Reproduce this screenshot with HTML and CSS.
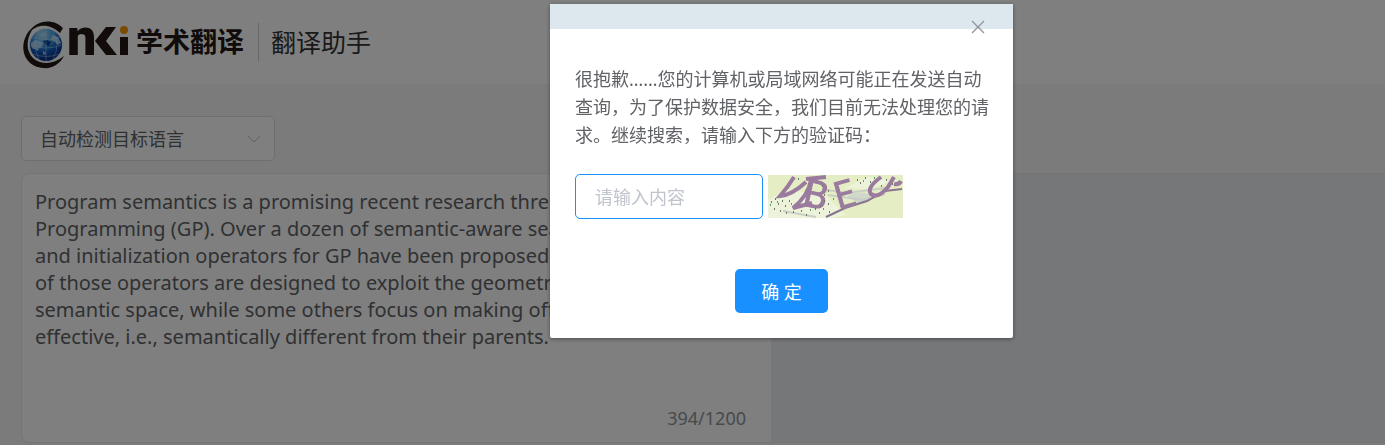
FILE: index.html
```html
<!DOCTYPE html>
<html lang="zh-CN">
<head>
<meta charset="utf-8">
<title>学术翻译 翻译助手</title>
<link rel="stylesheet" href="styles.css">
</head>
<body>
<div class="page">
  <header class="header">
    <a class="brand" href="#" aria-label="CNKI 学术翻译">
      <svg class="brand-mark" viewBox="0 0 108 50" width="108" height="50" aria-hidden="true">
        <defs>
          <radialGradient id="globe" cx="40%" cy="18%" r="85%">
            <stop offset="0" stop-color="#b4e2fa"/>
            <stop offset=".35" stop-color="#4aa3e4"/>
            <stop offset=".65" stop-color="#1258b8"/>
            <stop offset="1" stop-color="#06267c"/>
          </radialGradient>
        </defs>
        <path d="M6 13C13 1 30-3 41 8L38 13C30 5 18 3 10 10Z" fill="#231815"/>
        <path d="M7 11C-5 27 3 47 21 48C30 49 38 44 42 36C31 45 19 45 11 38C4 31 4 20 10 10Z" fill="#231815"/>
        <circle cx="24" cy="25" r="17" fill="#dff2fc"/>
        <circle cx="24" cy="25" r="16" fill="url(#globe)"/>
        <path d="M9 23L13 20 18 21 21 23 20 27 17 28 16 31 13 29 11 29 9 26ZM21 31L24 33 23 35 21 34ZM30 15L36 17 39 23 36 25 33 22 29 20Z" fill="#c5eaff" opacity=".75"/>
        <path d="M21 21L25 20 29 22 27 26 24 25Z" fill="#0b3c94"/>
        <path d="M9 25Q24 31 40 25M11 17Q24 22 38 17M11 34Q24 39 37 34M24 9V41M17 11Q9 25 17 39M31 11Q39 25 31 39" fill="none" stroke="#d9f2ff" stroke-width="1" opacity=".4"/>
        <text x="45" y="35" class="brand-letter">n</text>
        <path d="M84 7H94L84 21L95 35H84L73 21Z" fill="#231815"/>
        <rect x="98" y="17" width="8" height="18" fill="#231815"/>
        <circle cx="102" cy="10" r="4" fill="#f39800"/>
      </svg>
      <span class="brand-name">学术翻译</span>
    </a>
    <h1 class="product">翻译助手</h1>
  </header>
  <main class="main">
    <div class="toolbar">
      <label class="select">
        <select aria-label="目标语言"><option>自动检测目标语言</option></select>
        <svg viewBox="0 0 14 8" width="14" height="8" aria-hidden="true"><path d="M1 1L7 7L13 1" fill="none" stroke="#c0c4cc" stroke-width="1"/></svg>
      </label>
    </div>
    <div class="panels">
      <section class="source">
        <textarea class="source-text" aria-label="原文">Program semantics is a promising recent research thread in Genetic
Programming (GP). Over a dozen of semantic-aware search, selection
and initialization operators for GP have been proposed to date. Some
of those operators are designed to exploit the geometric properties
semantic space, while some others focus on making offspring
effective, i.e., semantically different from their parents.</textarea>
        <div class="count">394/1200</div>
      </section>
      <section class="result"></section>
    </div>
  </main>
</div>
<div class="overlay">
  <form class="dialog" role="dialog" aria-modal="true" aria-labelledby="notice">
    <div class="dialog-bar">
      <button class="close" type="button" aria-label="关闭">
        <svg viewBox="0 0 14 14" width="14" height="14"><path d="M1 1L13 13M13 1L1 13" fill="none" stroke="#909399" stroke-width="1.3"/></svg>
      </button>
    </div>
    <div class="dialog-body">
      <p class="notice" id="notice">很抱歉……您的计算机或局域网络可能正在发送自动<br>查询，为了保护数据安全，我们目前无法处理您的请<br>求。继续搜索，请输入下方的验证码：</p>
      <div class="verify">
        <input class="code" type="text" placeholder="请输入内容" aria-label="验证码">
        <svg class="captcha" viewBox="0 0 135 43" width="135" height="43" role="img" aria-label="验证码图片">
          <rect width="135" height="43" fill="#e5edc4"/>
          <path d="M0 25L20 15 57 20 78 40 62 43 0 43ZM76 13L100 2 125 6 100 14Z" fill="#edf3db"/>
          <path d="M54 14L78 18 118 13M60 20L95 25 117 19M15 36L48 42" fill="none" stroke="#c9cfc4" stroke-width="2"/>
          <path d="M79 20Q97 14 105 22L90 29Z" fill="#c3c9cf" opacity=".6"/>
          <path d="M58 42L77 33 99 26 117 16 134 14" fill="none" stroke="#88758d" stroke-width="2"/>
          <path d="M26 2Q20 12 12 21Q24 20 38 7M43 5Q40 21 25 33L44 28M38 4L58 2" fill="none" stroke="#9a7b9e" stroke-width="4"/>
          <text class="captcha-letter" x="33" y="30" transform="rotate(12 33 30)">B</text>
          <text class="captcha-letter" x="70" y="35" transform="rotate(-16 70 35)">E</text>
          <path d="M113 2Q98 13 103 19Q110 24 120 12L126 2M126 9Q131 10 133 6" fill="none" stroke="#9a7b9e" stroke-width="4"/>
          <path d="M3 27h1M7 24h1M10 29h1M14 26h1M17 31h1M21 26h1M6 34h1M12 36h1M18 38h1M25 37h1M33 36h1M38 40h1M47 34h1M52 31h1M56 26h1M60 29h1M51 38h1M61 37h1M56 20h1M60 16h1M54 11h1M30 4h1M89 5h1M92 8h1M97 3h1M102 7h1M113 11h1M124 9h1M118 5h1" stroke="#6f7868" stroke-width="2"/>
          <path d="M2 30h1M9 27h1M23 29h1M42 35h1M55 34h1M65 24h1M95 6h1M106 3h1" stroke="#57a067" stroke-width="2"/>
        </svg>
      </div>
      <div class="actions"><button class="confirm" type="submit">确 定</button></div>
    </div>
  </form>
</div>
</body>
</html>
```
FILE: styles.css
```css
* { box-sizing: border-box; }
body {
  margin: 0;
  background: #f7f7f7;
  color: #606266;
  font-family: "Noto Sans", "Noto Sans CJK SC", sans-serif;
}
.page { min-height: 100vh; display: flex; flex-direction: column; }
.header {
  display: flex;
  align-items: center;
  height: 84px;
  padding: 0 22px;
  background: #fff;
}
.brand {
  display: flex;
  align-items: center;
  gap: 6px;
  padding-right: 14px;
  color: #231815;
  text-decoration: none;
}
.brand-mark { display: block; margin-top: 6px; overflow: visible; }
.brand-letter { font: 900 52px Roboto, sans-serif; fill: #231815; }
.brand-name { font-size: 27px; font-weight: 700; line-height: 38px; }
.product {
  margin: 0;
  padding-left: 12px;
  border-left: 1px solid #ccc;
  color: #333;
  font-size: 25px;
  font-weight: 400;
  line-height: 38px;
}
.main { flex: 1; display: flex; flex-direction: column; }
.toolbar { padding: 32px 21px 12px; }
.select { display: inline-flex; align-items: center; position: relative; vertical-align: top; }
.select select {
  appearance: none;
  width: 254px;
  height: 45px;
  padding: 0 40px 0 18px;
  border: 1px solid #dcdfe6;
  border-radius: 5px;
  background: #fff;
  color: #606266;
  font: inherit;
  font-size: 18px;
}
.select svg { position: absolute; right: 14px; pointer-events: none; }
.panels { flex: 1; display: flex; padding: 0 0 2px 21px; }
.source {
  flex: 0 0 750px;
  display: flex;
  flex-direction: column;
  border: 1px solid #e8e8e8;
  border-right: 0;
  border-radius: 8px 0 0 8px;
  background: #fff;
}
.source-text {
  flex: 1;
  width: 100%;
  padding: 14px 13px 0;
  border: 0;
  outline: 0;
  resize: none;
  overflow: hidden;
  background: transparent;
  color: #606266;
  font: 20px/27px "Noto Sans", sans-serif;
}
.count {
  padding: 0 25px 12px;
  color: #909399;
  font-size: 18px;
  line-height: 24px;
  text-align: right;
}
.result {
  flex: 1;
  border: solid #e8e8e8;
  border-width: 1px 0;
  background: #edeff3;
}
.overlay {
  position: fixed;
  inset: 0;
  padding: 4px 0 0 550px;
  background: rgba(0, 0, 0, .5);
}
.dialog {
  width: 463px;
  border-radius: 2px;
  background: #fff;
  box-shadow: 0 1px 4px rgba(0, 0, 0, .4);
}
.dialog-bar {
  display: flex;
  justify-content: flex-end;
  height: 25px;
  padding: 16px 28px 0;
  background: #dde8ee;
}
.close { height: 14px; padding: 0; border: 0; background: transparent; }
.close svg { display: block; }
.dialog-body { padding: 36px 25px 25px; }
.notice { margin: 0; font-size: 18px; line-height: 28px; white-space: nowrap; }
.verify { display: flex; align-items: center; gap: 5px; margin-top: 25px; }
.code {
  width: 188px;
  height: 45px;
  padding: 0 19px;
  border: 1px solid #1890ff;
  border-radius: 5px;
  outline: 0;
  color: #606266;
  font: inherit;
  font-size: 18px;
}
.code::placeholder { color: #c0c4cc; }
.captcha { overflow: visible; }
.captcha-letter {
  font: 400 38px "Open Sans", sans-serif;
  fill: #9a7b9e;
  stroke: #9a7b9e;
  stroke-width: 1px;
}
.actions { display: flex; justify-content: center; margin-top: 50px; }
.confirm {
  width: 93px;
  height: 44px;
  border: 0;
  border-radius: 5px;
  background: #1890ff;
  color: #fff;
  font: inherit;
  font-size: 18px;
}
```
